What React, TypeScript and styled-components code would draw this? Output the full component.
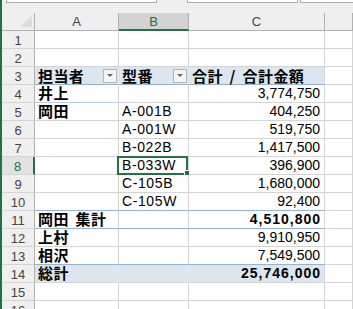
import { Fragment } from "react";
import styled, { createGlobalStyle, css } from "styled-components";

const GRID = "#d4d4d4";
const HEAD_LINE = "#b1b1b1";
const HEAD_BG = "#efefef";
const PIVOT_LINE = "#95b3d7";
const PIVOT_FILL = "#dce6f1";
const EXCEL_GREEN = "#217346";

const GlobalStyle = createGlobalStyle`
  html, body {
    margin: 0;
    padding: 0;
    background: #fff;
  }
  body {
    font-family: "Liberation Sans", "Noto Sans CJK JP", sans-serif;
    color: #000;
  }
`;

const Window = styled.div`
  width: 353px;
  height: 309px;
  overflow: hidden;
  box-sizing: border-box;
  border-left: 2px solid ${EXCEL_GREEN};
  display: flex;
  flex-direction: column;
  background: #fff;
`;

const FormulaStrip = styled.div`
  height: 13px;
  flex: none;
  background: ${HEAD_BG};
  display: flex;
  align-items: flex-start;
`;

const FormulaBox = styled.div<{ $offset: number; $width?: number }>`
  margin-left: ${(p) => p.$offset}px;
  ${(p) => (p.$width ? `width: ${p.$width}px;` : "flex: 1;")}
  height: 3px;
  box-sizing: border-box;
  background: #fff;
  border: 1px solid #ababab;
  border-top: none;
  ${(p) => !p.$width && "border-right: none;"}
`;

const Sheet = styled.div`
  display: grid;
  grid-template-columns: 33px 84px 70px 136px 1fr;
  grid-auto-rows: 18px;
`;

const Corner = styled.div`
  position: relative;
  background: ${HEAD_BG};
  border-right: 1px solid ${HEAD_LINE};
  border-bottom: 1px solid ${HEAD_LINE};
  box-sizing: border-box;

  &::after {
    content: "";
    position: absolute;
    right: 2px;
    bottom: 3px;
    width: 0;
    height: 0;
    border-left: 12px solid transparent;
    border-bottom: 12px solid #dcdcdc;
  }
`;

const ColHead = styled.div<{ $active?: boolean }>`
  box-sizing: border-box;
  display: flex;
  align-items: center;
  justify-content: center;
  font-size: 13px;
  color: #444;
  background: ${HEAD_BG};
  border-right: 1px solid ${HEAD_LINE};
  border-bottom: 1px solid ${HEAD_LINE};
  ${(p) =>
    p.$active &&
    css`
      background: #d2d2d2;
      color: ${EXCEL_GREEN};
      border-bottom: 2px solid ${EXCEL_GREEN};
    `}
`;

const RowHead = styled.div<{ $active?: boolean }>`
  box-sizing: border-box;
  display: flex;
  align-items: center;
  justify-content: center;
  padding-top: 1px;
  font-size: 13px;
  color: #444;
  background: ${HEAD_BG};
  border-right: 1px solid ${HEAD_LINE};
  border-bottom: 1px solid ${GRID};
  ${(p) =>
    p.$active &&
    css`
      background: #e1e1e1;
      color: ${EXCEL_GREEN};
      border-right: 2px solid ${EXCEL_GREEN};
    `}
`;

type Align = "left" | "right";

const Cell = styled.div<{
  $align?: Align;
  $fill?: boolean;
  $line?: string;
  $joined?: boolean;
}>`
  position: relative;
  box-sizing: border-box;
  display: flex;
  align-items: flex-end;
  justify-content: ${(p) => (p.$align === "right" ? "flex-end" : "flex-start")};
  padding: 0 4px 1px 3px;
  font-size: 14px;
  line-height: 16px;
  white-space: nowrap;
  background: ${(p) => (p.$fill ? PIVOT_FILL : "#fff")};
  border-right: 1px solid ${(p) => (p.$joined ? PIVOT_FILL : GRID)};
  border-bottom: 1px solid ${(p) => p.$line ?? GRID};
`;

// bold Japanese labels: owner names and pivot captions
const Name = styled.span`
  font-family: "Noto Sans CJK JP", sans-serif;
  font-weight: bold;
  font-size: 15px;
  line-height: 16px;
  letter-spacing: 0.4px;
  word-spacing: 3px;
`;

const Model = styled.span`
  letter-spacing: 0.6px;
`;

const Amount = styled.span<{ $bold?: boolean }>`
  font-size: 14px;
  ${(p) =>
    p.$bold &&
    css`
      font-weight: bold;
      letter-spacing: 1px;
      margin-right: -1px;
    `}
`;

const HeaderCell = styled(Cell)`
  justify-content: space-between;
  align-items: center;
  padding: 0 1px 0 3px;
`;

const FilterButton = styled.span`
  width: 14px;
  height: 14px;
  box-sizing: border-box;
  border: 1px solid #b7b7b7;
  background: #f4f4f4;
  display: flex;
  align-items: center;
  justify-content: center;

  &::after {
    content: "";
    border-left: 3px solid transparent;
    border-right: 3px solid transparent;
    border-top: 3px solid #666;
  }
`;

const Selection = styled.div`
  position: absolute;
  left: -2px;
  top: -1px;
  right: 0;
  bottom: -1px;
  border: 2px solid ${EXCEL_GREEN};
  pointer-events: none;

  &::after {
    content: "";
    position: absolute;
    right: -5px;
    bottom: -4px;
    width: 5px;
    height: 5px;
    background: ${EXCEL_GREEN};
    border: 1px solid #fff;
  }
`;

interface PivotRow {
  owner?: string;
  model?: string;
  amount?: string;
  total?: boolean;
  grand?: boolean;
  line?: string;
  ownerLine?: string;
}

// rows 4..14 of the pivot
const pivot: PivotRow[] = [
  { owner: "井上", amount: "3,774,750", ownerLine: "#b8cce4" },
  { owner: "岡田", model: "A-001B", amount: "404,250" },
  { model: "A-001W", amount: "519,750" },
  { model: "B-022B", amount: "1,417,500" },
  { model: "B-033W", amount: "396,900" },
  { model: "C-105B", amount: "1,680,000" },
  { model: "C-105W", amount: "92,400", line: PIVOT_LINE },
  { owner: "岡田 集計", amount: "4,510,800", total: true, line: PIVOT_LINE },
  { owner: "上村", amount: "9,910,950" },
  { owner: "相沢", amount: "7,549,500", line: PIVOT_LINE },
  { owner: "総計", amount: "25,746,000", total: true, grand: true },
];

const ACTIVE_ROW = 8;

function EmptyRow({ n }: { n: number }) {
  return (
    <>
      <RowHead>{n}</RowHead>
      <Cell />
      <Cell />
      <Cell />
      <Cell />
    </>
  );
}

function App() {
  return (
    <>
      <GlobalStyle />
      <Window>
        <FormulaStrip>
          <FormulaBox $offset={4} $width={151} />
          <FormulaBox $offset={30} $width={111} />
          <FormulaBox $offset={2} />
        </FormulaStrip>
        <Sheet>
          <Corner />
          <ColHead>A</ColHead>
          <ColHead $active>B</ColHead>
          <ColHead>C</ColHead>
          <ColHead />

          <EmptyRow n={1} />
          <EmptyRow n={2} />

          <RowHead>3</RowHead>
          <HeaderCell $fill $joined $line={PIVOT_LINE}>
            <Name>担当者</Name>
            <FilterButton />
          </HeaderCell>
          <HeaderCell $fill $joined $line={PIVOT_LINE}>
            <Name>型番</Name>
            <FilterButton />
          </HeaderCell>
          <HeaderCell $fill $line={PIVOT_LINE}>
            <Name>合計 / 合計金額</Name>
          </HeaderCell>
          <Cell />

          {pivot.map((r, i) => {
            const n = i + 4;
            return (
              <Fragment key={n}>
                <RowHead $active={n === ACTIVE_ROW}>{n}</RowHead>
                <Cell $fill={r.grand} $joined={r.grand} $line={r.ownerLine ?? r.line}>
                  {r.owner && <Name>{r.owner}</Name>}
                </Cell>
                <Cell $fill={r.grand} $joined={r.grand} $line={r.line}>
                  {r.model && <Model>{r.model}</Model>}
                  {n === ACTIVE_ROW && <Selection />}
                </Cell>
                <Cell $align="right" $fill={r.grand} $line={r.line}>
                  {r.amount && <Amount $bold={r.total}>{r.amount}</Amount>}
                </Cell>
                <Cell />
              </Fragment>
            );
          })}

          <EmptyRow n={15} />
          <EmptyRow n={16} />
        </Sheet>
      </Window>
    </>
  );
}

export default App;
